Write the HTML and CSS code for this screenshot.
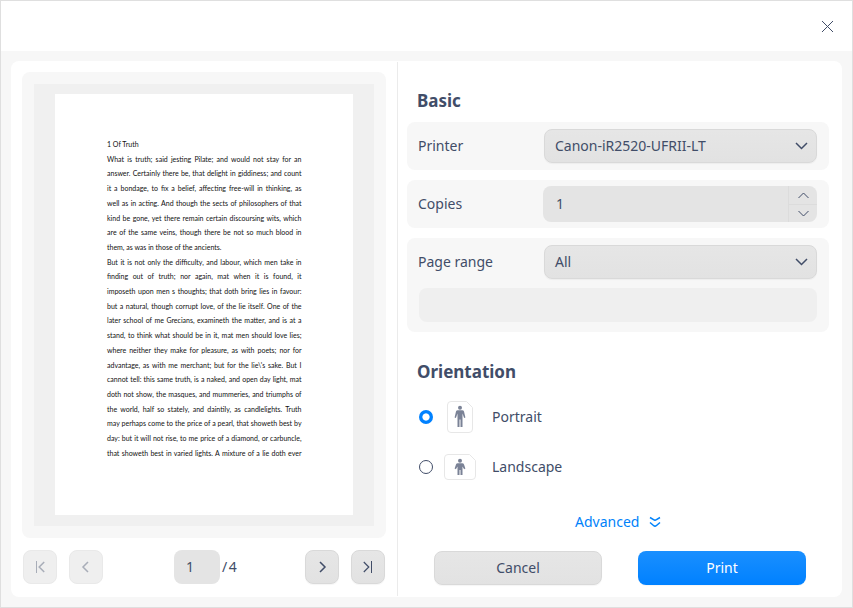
FILE: index.html
```html
<!DOCTYPE html>
<html lang="en">
<head>
<meta charset="utf-8">
<title>Print</title>
<link rel="stylesheet" href="styles.css">
</head>
<body>
<div class="window">
  <header class="titlebar">
    <svg class="close" width="13" height="13" viewBox="0 0 13 13"><path d="M1 1l11 11M12 1L1 12"/></svg>
  </header>
  <main class="panel">
    <section class="left">
      <div class="preview"><div class="canvas"><div class="paper">
        <p class="end">1 Of Truth</p>
        <p>What is truth; said jesting Pilate; and would not stay for an</p>
        <p>answer. Certainly there be, that delight in giddiness; and count</p>
        <p>it a bondage, to fix a belief, affecting free-will in thinking, as</p>
        <p>well as in acting. And though the sects of philosophers of that</p>
        <p>kind be gone, yet there remain certain discoursing wits, which</p>
        <p>are of the same veins, though there be not so much blood in</p>
        <p class="end">them, as was in those of the ancients.</p>
        <p>But it is not only the difficulty, and labour, which men take in</p>
        <p>finding out of truth; nor again, mat when it is found, it</p>
        <p>imposeth upon men s thoughts; that doth bring lies in favour:</p>
        <p>but a natural, though corrupt love, of the lie itself. One of the</p>
        <p>later school of me Grecians, examineth the matter, and is at a</p>
        <p>stand, to think what should be in it, mat men should love lies;</p>
        <p>where neither they make for pleasure, as with poets; nor for</p>
        <p>advantage, as with me merchant; but for the lie\'s sake. But I</p>
        <p>cannot tell: this same truth, is a naked, and open day light, mat</p>
        <p>doth not show, the masques, and mummeries, and triumphs of</p>
        <p>the world, half so stately, and daintily, as candlelights. Truth</p>
        <p>may perhaps come to the price of a pearl, that showeth best by</p>
        <p>day: but it will not rise, to me price of a diamond, or carbuncle,</p>
        <p>that showeth best in varied lights. A mixture of a lie doth ever</p>
      </div></div></div>
      <nav class="pager">
        <button class="btn square off"><svg width="16" height="16" viewBox="0 0 16 16"><path class="thin" d="M4.500 2v12"/><path d="M12.200 3l-5 5 5 5"/></svg></button>
        <button class="btn square off prev"><svg width="16" height="16" viewBox="0 0 16 16"><path d="M10 3L5 8l5 5"/></svg></button>
        <span class="page">1</span><span class="total">/<b>4</b></span>
        <button class="btn square next"><svg width="16" height="16" viewBox="0 0 16 16"><path d="M6 3l5 5-5 5"/></svg></button>
        <button class="btn square last"><svg width="16" height="16" viewBox="0 0 16 16"><path class="light" d="M3.800 3l5 5-5 5"/><path class="thin" d="M11.500 2v12"/></svg></button>
      </nav>
    </section>
    <section class="right">
      <h2>Basic</h2>
      <div class="row"><label>Printer</label>
        <div class="btn select">Canon-iR2520-UFRII-LT<svg width="14" height="10" viewBox="0 0 14 10"><path d="M2 2l5.500 5.500L13 2"/></svg></div></div>
      <div class="row"><label>Copies</label>
        <div class="spin"><span>1</span><div class="steps">
          <i><svg width="12" height="8" viewBox="0 0 12 8"><path d="M1.500 7l5-5 5 5"/></svg></i>
          <i><svg width="12" height="8" viewBox="0 0 12 8"><path d="M1.500 1l5 5 5-5"/></svg></i>
        </div></div></div>
      <div class="row range"><label>Page range</label>
        <div class="btn select">All<svg width="14" height="10" viewBox="0 0 14 10"><path d="M2 2l5.500 5.500L13 2"/></svg></div>
        <div class="entry"></div></div>
      <h2 class="orient">Orientation</h2>
      <div class="option"><span class="radio on"></span>
        <svg class="sheet" width="32" height="32" viewBox="0 0 32 32"><path class="edge" d="M7 .5h15.500l6 6V28a3.500 3.500 0 0 1-3.500 3.500H7A3.500 3.500 0 0 1 3.500 28V4A3.500 3.500 0 0 1 7 .5z"/><circle cx="16" cy="6.700" r="2"/><path d="M13.700 9.300h4.600q1.300 0 1.700 1.200l1.400 6-1.300.500-1.600-4.500V26h-2v-7.500h-1V26h-2V12.500L11.900 17l-1.300-.5 1.400-6q.4-1.200 1.700-1.200z"/></svg>
        <span>Portrait</span></div>
      <div class="option second"><span class="radio"></span>
        <svg class="sheet" width="32" height="26" viewBox="0 0 32 26"><path class="edge" d="M4 .5h21.500l6 6V22a3.500 3.500 0 0 1-3.500 3.500H4A3.500 3.500 0 0 1 .5 22V4A3.500 3.500 0 0 1 4 .5z"/><circle cx="16" cy="6.700" r="2"/><path d="M13.700 9.300h4.600q1.300 0 1.700 1.200l1.400 4-1.300.8-1.600-2.800V21h-2v-5h-1v5h-2v-8.500l-1.600 2.800-1.300-.8 1.400-4q.4-1.200 1.700-1.200z"/></svg>
        <span>Landscape</span></div>
      <div class="advanced">Advanced<svg width="12" height="12" viewBox="0 0 12 12"><path d="M1 1.500l3.500 2q1.500 1.500 3 0l3.500-2M1 6.500l3.500 3q1.500 1.300 3 0l3.500-3"/></svg></div>
      <div class="actions"><button class="btn">Cancel</button><button class="btn primary">Print</button></div>
    </section>
  </main>
</div>
</body>
</html>
```
FILE: styles.css
```css
* { box-sizing: border-box; }
body { margin: 0; font: 14px/20px "Noto Sans", sans-serif; color: #414d68; }
svg { fill: none; stroke: #414d68; stroke-width: 1.5; flex: none; }
.window { width: 853px; height: 608px; border: 1px solid #dfdfdf; background: #f7f7f7; }
.titlebar { height: 50px; background: #fff; display: flex; justify-content: flex-end; padding: 19px 18px 0 0; }
.close { stroke-width: 1; }
.panel { margin: 10px 10px 0; width: 831px; height: 536px; border-radius: 8px; background: #fff; display: flex; }
.left { width: 387px; padding: 10px 0 0 11px; margin: 1px 0; border-right: 1px solid #ebebeb; }
.preview { width: 364px; height: 466px; padding: 12px; border-radius: 8px; background: #f7f7f7; }
.canvas { width: 340px; height: 442px; padding: 10px 21px; background: #f0f0f0; }
.paper { width: 298px; height: 421px; padding: 43px 51.500px 0 52px; background: #fff; color: #111; font: 7px/14.710px Lato, sans-serif; }
.paper p { margin: 0; white-space: nowrap; text-align: justify; text-align-last: justify; }
.paper .end { text-align-last: left; }
.pager { display: flex; align-items: center; padding: 12px 0 0 1px; }
.btn { display: flex; align-items: center; justify-content: center; height: 34px; padding: 0; border: 1px solid #d9d9d9; border-radius: 8px; background: linear-gradient(#e6e6e6, #e2e2e2); box-shadow: 0 1px 1px rgba(0,0,0,.04); font: inherit; color: inherit; }
.square { width: 34px; }
.square .thin { stroke-width: 1; }
.square .light { stroke-width: 1.2; }
.off { border-color: #e9e9e9; background: #efefef; box-shadow: none; }
.off svg { opacity: .4; }
.prev { margin-left: 12px; }
.page { margin-left: 71px; width: 46px; height: 34px; border-radius: 8px; background: #e4e4e4; padding: 7px 12px; }
.total { margin-left: 2px; width: 83px; }
.total b { font-weight: 400; margin-left: 1.500px; }
.last { margin-left: 12px; }
.right { width: 444px; padding: 28px 13px 0 9px; }
h2 { margin: 0 0 10px 10px; font-size: 17px; line-height: 24px; font-weight: 700; height: 23px; }
.row { display: flex; flex-wrap: wrap; align-items: center; align-content: center; justify-content: space-between; height: 48px; width: 422px; margin-bottom: 10px; padding: 0 12px 0 11px; border-radius: 8px; background: #f7f7f7; }
.select { width: 273px; justify-content: space-between; padding: 0 8px 0 10px; }
.spin { width: 274px; height: 36px; border-radius: 8px; background: #e4e4e4; display: flex; justify-content: space-between; padding-left: 13px; line-height: 36px; }
.steps { width: 29px; border-left: 1px solid #dcdcdc; }
.steps i { display: flex; height: 18px; align-items: center; justify-content: center; }
.steps i + i { border-top: 1px solid #dcdcdc; }
.steps svg { stroke-width: 1; }
.row.range { height: 94px; padding-top: 7px; align-content: flex-start; }
.entry { width: 398px; height: 34px; margin: 9px 0 0 1px; border-radius: 8px; background: #efefef; }
.orient { margin: 28px 0 18px 10px; }
.option { display: flex; align-items: center; height: 32px; padding-left: 12px; }
.second { margin-top: 18px; }
.radio { width: 14px; height: 14px; border: 1px solid #414d68; border-radius: 50%; margin-right: 11px; }
.on { border: 0; background: radial-gradient(circle, #fff 3.200px, #0081ff 4px); }
.sheet { fill: #7a8296; stroke: none; margin-right: 16px; }
.sheet .edge { fill: #fff; stroke: #e7e7e7; stroke-width: 1; }
.advanced { display: flex; align-items: center; height: 20px; margin: 29px 0 0 168px; color: #0082fa; }
.advanced svg { margin-left: 10px; stroke: #0082fa; }
.actions { display: flex; gap: 36px; margin: 19px 0 0 27px; }
.actions .btn { width: 168px; }
.actions .primary { border: 0; background: linear-gradient(#1a8fff, #0081ff); color: #fff; }
```
